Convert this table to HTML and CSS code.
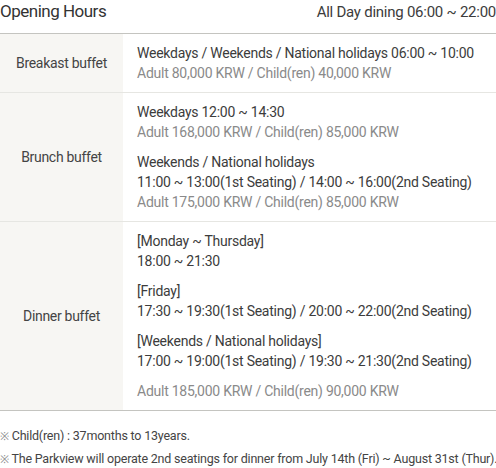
FILE: index.html
```html
<!DOCTYPE html>
<html>
<head>
<meta charset="utf-8">
<link rel="stylesheet" href="styles.css">
</head>
<body>
<div class="page">
  <div class="head">
    <h2 class="title">Opening Hours</h2>
    <span class="allday">All Day dining 06:00 ~ 22:00</span>
  </div>
  <div class="table">
    <div class="row">
      <div class="name">Breakast buffet</div>
      <div class="info">
        <div class="group">
          <p class="line">Weekdays / Weekends / National holidays 06:00 ~ 10:00</p>
          <p class="price">Adult 80,000 KRW / Child(ren) 40,000 KRW</p>
        </div>
      </div>
    </div>
    <div class="row">
      <div class="name">Brunch buffet</div>
      <div class="info">
        <div class="group">
          <p class="line">Weekdays 12:00 ~ 14:30</p>
          <p class="price">Adult 168,000 KRW / Child(ren) 85,000 KRW</p>
        </div>
        <div class="group">
          <p class="line">Weekends / National holidays</p>
          <p class="line">11:00 ~ 13:00(1st Seating) / 14:00 ~ 16:00(2nd Seating)</p>
          <p class="price">Adult 175,000 KRW / Child(ren) 85,000 KRW</p>
        </div>
      </div>
    </div>
    <div class="row last">
      <div class="name">Dinner buffet</div>
      <div class="info">
        <div class="group">
          <p class="line">[Monday ~ Thursday]</p>
          <p class="line">18:00 ~ 21:30</p>
        </div>
        <div class="group">
          <p class="line">[Friday]</p>
          <p class="line">17:30 ~ 19:30(1st Seating) / 20:00 ~ 22:00(2nd Seating)</p>
        </div>
        <div class="group">
          <p class="line">[Weekends / National holidays]</p>
          <p class="line">17:00 ~ 19:00(1st Seating) / 19:30 ~ 21:30(2nd Seating)</p>
        </div>
        <div class="group">
          <p class="price">Adult 185,000 KRW / Child(ren) 90,000 KRW</p>
        </div>
      </div>
    </div>
  </div>
  <ul class="notes">
    <li><span class="mark">※</span> Child(ren) : 37months to 13years.</li>
    <li><span class="mark">※</span> The Parkview will operate 2nd seatings for dinner from July 14th (Fri) ~ August 31st (Thur).</li>
  </ul>
</div>
</body>
</html>
```
FILE: styles.css
```css
* { box-sizing: border-box; }
html, body { margin: 0; padding: 0; background: #fff; }
body {
  font-family: Roboto, "Liberation Sans", Arial, sans-serif;
  color: #3c3c3c;
  width: 496px;
}
.page { width: 496px; }
.head {
  display: flex;
  justify-content: space-between;
  align-items: baseline;
  height: 33px;
}
.title {
  margin: 0;
  font-size: 17px;
  font-weight: normal;
  letter-spacing: -0.5px;
  color: #333;
  line-height: 22px;
}
.allday {
  font-size: 15px;
  letter-spacing: -0.25px;
  color: #3c3c3c;
  line-height: 22px;
}
.table {
  border-top: 1px solid #c4c4c0;
  border-bottom: 1px solid #c4c4c0;
}
.row {
  display: flex;
  border-bottom: 1px solid #e6e6e2;
}
.row.last { border-bottom: none; }
.name {
  width: 123px;
  flex: none;
  background: #f7f6f3;
  display: flex;
  align-items: center;
  justify-content: center;
  font-size: 14px;
  letter-spacing: -0.3px;
  color: #444;
}
.info {
  flex: 1;
  padding: 9px 0 9px 14px;
  display: flex;
  flex-direction: column;
  gap: 10px;
}
.line, .price {
  margin: 0;
  font-size: 14px;
  letter-spacing: -0.25px;
  line-height: 20px;
  white-space: nowrap;
}
.line { color: #3c3c3c; }
.price { color: #8a8a8a; }
.notes {
  list-style: none;
  margin: 0;
  padding: 14px 0 0 0;
  font-size: 12.5px;
  letter-spacing: -0.2px;
  color: #444;
}
.notes li { line-height: 22px; white-space: nowrap; }
.mark { color: #888; font-size: 11px; }
```
